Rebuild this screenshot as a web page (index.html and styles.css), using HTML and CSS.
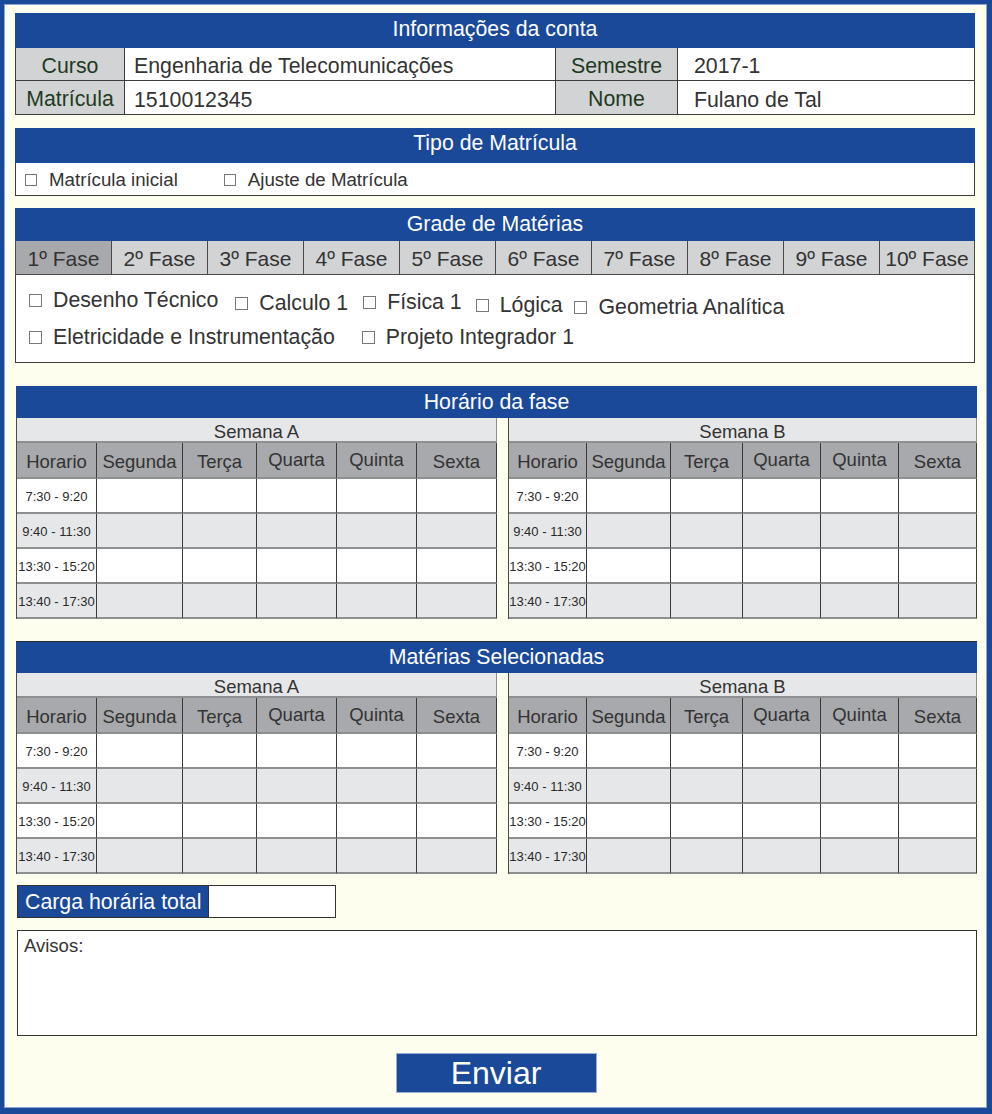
FILE: index.html
```html
<!DOCTYPE html>
<html lang="pt-BR">
<head>
<meta charset="utf-8">
<title>Matrícula</title>
<link rel="stylesheet" href="styles.css">
</head>
<body>
<div class="page">
  <section class="card info-card">
    <div class="bar bar-35">Informações da conta</div>
    <div class="info">
      <div class="lbl">Curso</div>
      <div class="val">Engenharia de Telecomunicações</div>
      <div class="lbl">Semestre</div>
      <div class="val val-r">2017-1</div>
      <div class="lbl">Matrícula</div>
      <div class="val">1510012345</div>
      <div class="lbl">Nome</div>
      <div class="val val-r">Fulano de Tal</div>
    </div>
  </section>

  <section class="card tipo-card">
    <div class="bar bar-35 bar-tipo">Tipo de Matrícula</div>
    <div class="tipo">
      <label class="opt"><span class="cb"></span>Matrícula inicial</label>
      <label class="opt opt-2"><span class="cb"></span>Ajuste de Matrícula</label>
    </div>
  </section>

  <section class="card grade-card">
    <div class="bar bar-33">Grade de Matérias</div>
    <div class="tabs">
      <div class="tab active">1º Fase</div>
      <div class="tab">2º Fase</div>
      <div class="tab">3º Fase</div>
      <div class="tab">4º Fase</div>
      <div class="tab">5º Fase</div>
      <div class="tab">6º Fase</div>
      <div class="tab">7º Fase</div>
      <div class="tab">8º Fase</div>
      <div class="tab">9º Fase</div>
      <div class="tab">10º Fase</div>
    </div>
    <div class="subjects">
      <div class="srow srow-1">
        <label class="item"><span class="cb cb-13"></span>Desenho Técnico</label>
        <label class="item i-calc"><span class="cb cb-13"></span>Calculo 1</label>
        <label class="item i-fis"><span class="cb cb-13"></span>Física 1</label>
        <label class="item i-log"><span class="cb cb-13"></span>Lógica</label>
        <label class="item i-geo"><span class="cb cb-13"></span>Geometria Analítica</label>
      </div>
      <div class="srow">
        <label class="item"><span class="cb cb-13"></span>Eletricidade e Instrumentação</label>
        <label class="item i-proj"><span class="cb cb-13"></span>Projeto Integrador 1</label>
      </div>
    </div>
  </section>

  <section class="card sched-card sched-1">
    <div class="bar bar-32">Horário da fase</div>
    <div class="weeks">
      <div class="week week-a">
        <div class="wname">Semana A</div>
        <div class="hd">Horario</div><div class="hd">Segunda</div><div class="hd">Terça</div><div class="hd up">Quarta</div><div class="hd up">Quinta</div><div class="hd">Sexta</div>
        <div class="tm">7:30 - 9:20</div><div class="c"></div><div class="c"></div><div class="c"></div><div class="c"></div><div class="c"></div>
        <div class="tm alt">9:40 - 11:30</div><div class="c alt"></div><div class="c alt"></div><div class="c alt"></div><div class="c alt"></div><div class="c alt"></div>
        <div class="tm">13:30 - 15:20</div><div class="c"></div><div class="c"></div><div class="c"></div><div class="c"></div><div class="c"></div>
        <div class="tm alt">13:40 - 17:30</div><div class="c alt"></div><div class="c alt"></div><div class="c alt"></div><div class="c alt"></div><div class="c alt"></div>
      </div>
      <div class="week week-b">
        <div class="wname">Semana B</div>
        <div class="hd">Horario</div><div class="hd">Segunda</div><div class="hd">Terça</div><div class="hd up">Quarta</div><div class="hd up">Quinta</div><div class="hd">Sexta</div>
        <div class="tm">7:30 - 9:20</div><div class="c"></div><div class="c"></div><div class="c"></div><div class="c"></div><div class="c"></div>
        <div class="tm alt">9:40 - 11:30</div><div class="c alt"></div><div class="c alt"></div><div class="c alt"></div><div class="c alt"></div><div class="c alt"></div>
        <div class="tm">13:30 - 15:20</div><div class="c"></div><div class="c"></div><div class="c"></div><div class="c"></div><div class="c"></div>
        <div class="tm alt">13:40 - 17:30</div><div class="c alt"></div><div class="c alt"></div><div class="c alt"></div><div class="c alt"></div><div class="c alt"></div>
      </div>
    </div>
  </section>

  <section class="card sched-card sched-2">
    <div class="bar bar-32 bar-edge">Matérias Selecionadas</div>
    <div class="weeks">
      <div class="week week-a">
        <div class="wname">Semana A</div>
        <div class="hd">Horario</div><div class="hd">Segunda</div><div class="hd">Terça</div><div class="hd up">Quarta</div><div class="hd up">Quinta</div><div class="hd">Sexta</div>
        <div class="tm">7:30 - 9:20</div><div class="c"></div><div class="c"></div><div class="c"></div><div class="c"></div><div class="c"></div>
        <div class="tm alt">9:40 - 11:30</div><div class="c alt"></div><div class="c alt"></div><div class="c alt"></div><div class="c alt"></div><div class="c alt"></div>
        <div class="tm">13:30 - 15:20</div><div class="c"></div><div class="c"></div><div class="c"></div><div class="c"></div><div class="c"></div>
        <div class="tm alt">13:40 - 17:30</div><div class="c alt"></div><div class="c alt"></div><div class="c alt"></div><div class="c alt"></div><div class="c alt"></div>
      </div>
      <div class="week week-b">
        <div class="wname">Semana B</div>
        <div class="hd">Horario</div><div class="hd">Segunda</div><div class="hd">Terça</div><div class="hd up">Quarta</div><div class="hd up">Quinta</div><div class="hd">Sexta</div>
        <div class="tm">7:30 - 9:20</div><div class="c"></div><div class="c"></div><div class="c"></div><div class="c"></div><div class="c"></div>
        <div class="tm alt">9:40 - 11:30</div><div class="c alt"></div><div class="c alt"></div><div class="c alt"></div><div class="c alt"></div><div class="c alt"></div>
        <div class="tm">13:30 - 15:20</div><div class="c"></div><div class="c"></div><div class="c"></div><div class="c"></div><div class="c"></div>
        <div class="tm alt">13:40 - 17:30</div><div class="c alt"></div><div class="c alt"></div><div class="c alt"></div><div class="c alt"></div><div class="c alt"></div>
      </div>
    </div>
  </section>

  <div class="carga">
    <div class="carga-label">Carga horária total</div>
    <div class="carga-box"></div>
  </div>

  <div class="avisos">Avisos:</div>

  <div class="actions">
    <button class="enviar" type="button">Enviar</button>
  </div>
</div>
</body>
</html>
```

FILE: styles.css
```css
* { box-sizing: border-box; }

html, body {
  margin: 0;
  padding: 0;
  background: #fefeef;
}

body {
  font-family: "Liberation Sans", Arial, Helvetica, sans-serif;
  color: #333333;
}

.page {
  width: 992px;
  height: 1114px;
  background: #fefeef;
  border-style: solid;
  border-color: #1a4999;
  border-width: 4px 5px 6px 4px;
  box-shadow: inset 0 0 0 1px #8ea6d6;
  padding: 9px 0 0 11px;
}

/* ---------- generic ---------- */
.card { width: 960px; }

.bar {
  background: #1a4999;
  color: #ffffff;
  font-size: 21.3px;
  text-align: center;
}
.bar-35 { height: 35px; line-height: 33px; }
.bar-tipo { line-height: 31px; }
.bar-33 { height: 33px; line-height: 33px; }
.bar-32 { height: 32px; line-height: 33px; }
.bar-edge { border-top: 1px solid #2b2b2b; line-height: 31px; }

.cb {
  display: inline-block;
  flex: none;
  width: 12px;
  height: 12px;
  border: 1px solid #77787b;
  background: #ffffff;
}
.cb-13 { width: 13px; height: 13px; }

/* ---------- informações ---------- */
.info {
  display: grid;
  grid-template-columns: 108px 430px 121px 296px;
  grid-template-rows: 32px 33px;
  gap: 1px;
  background: #3d3d3d;
  border: 1px solid #3d3d3d;
  border-top: 0;
}
.lbl {
  background: #d1d3d4;
  color: #1f3a1f;
  font-size: 21.3px;
  display: flex;
  align-items: center;
  justify-content: center;
  padding-top: 4px;
}
.val {
  background: #ffffff;
  font-size: 21.3px;
  display: flex;
  align-items: center;
  padding: 5px 0 0 9px;
}
.val-r { padding-left: 16px; }

/* ---------- tipo ---------- */
.tipo-card { margin-top: 13px; }
.tipo {
  height: 33px;
  background: #ffffff;
  border: 1px solid #3d3d3d;
  border-top: 0;
  display: flex;
  align-items: center;
  padding: 1px 0 0 9px;
  font-size: 18.7px;
}
.opt {
  display: flex;
  align-items: center;
  gap: 12px;
}
.opt-2 { margin-left: 46px; }

/* ---------- grade ---------- */
.grade-card { margin-top: 12px; }
.tabs {
  display: grid;
  grid-template-columns: repeat(9, 96px) 95px;
  height: 34px;
  border-left: 1px solid #4a4a4a;
  border-bottom: 1px solid #4a4a4a;
}
.tab {
  background: #d1d3d4;
  border-right: 1px solid #4a4a4a;
  font-size: 21px;
  display: flex;
  align-items: center;
  justify-content: center;
  padding-top: 2px;
  white-space: nowrap;
}
.tab.active { background: #a7a9ac; }

.subjects {
  height: 88px;
  background: #ffffff;
  border: 1px solid #3d3d3d;
  border-top: 0;
  padding: 13px 0 0 13px;
  font-size: 21.3px;
}
.srow {
  display: flex;
  align-items: flex-start;
}
.srow-1 { height: 37px; }
.item {
  display: flex;
  align-items: center;
  gap: 11px;
  line-height: 24px;
  white-space: nowrap;
}
.i-calc { margin-left: 17px; margin-top: 3px; }
.i-fis  { margin-left: 15px; margin-top: 2px; }
.i-log  { margin-left: 14px; margin-top: 5px; }
.i-geo  { margin-left: 12px; margin-top: 7px; }
.i-proj { margin-left: 27px; }

/* ---------- horários ---------- */
.sched-card { width: 961px; margin-left: 1px; }
.sched-1 { margin-top: 23px; }
.sched-2 { margin-top: 22px; }

.weeks {
  display: flex;
  gap: 11px;
}
.week {
  display: grid;
  grid-template-rows: 25px 36px 35px 35px 35px 35px;
  border-left: 1px solid #4a4a4a;
}
.week-a { grid-template-columns: 80px 86px 74px 80px 80px 80px; }
.week-b { grid-template-columns: 78px 84px 72px 78px 78px 78px; }

.week > div {
  border-right: 1px solid #3a3a3a;
  border-bottom: 2px solid #8e8f91;
  display: flex;
  align-items: center;
  justify-content: center;
  white-space: nowrap;
}
.week > .wname {
  grid-column: 1 / -1;
  background: #e6e7e8;
  font-size: 18.5px;
  padding-top: 4px;
  border-right-color: #8e8f91;
}
.hd {
  background: #a7a9ac;
  font-size: 18.5px;
  padding-top: 4px;
}
.week > .hd.up { padding-top: 0; padding-bottom: 0; }
.tm {
  font-size: 13px;
  color: #2a2a2a;
  padding-top: 1px;
}
.week > .tm, .week > .c { background: #ffffff; }
.week > .alt { background: #e6e7e8; }

/* ---------- carga ---------- */
.carga {
  display: flex;
  margin: 11px 0 0 2px;
  height: 33px;
}
.carga-label {
  width: 191px;
  background: #1a4999;
  color: #ffffff;
  font-size: 21.3px;
  display: flex;
  align-items: center;
  padding: 2px 0 0 7px;
  border: 1px solid #333333;
  border-right: 0;
  white-space: nowrap;
}
.carga-box {
  width: 128px;
  background: #ffffff;
  border: 1px solid #333333;
}

/* ---------- avisos ---------- */
.avisos {
  width: 960px;
  height: 106px;
  margin: 12px 0 0 2px;
  background: #ffffff;
  border: 1px solid #333333;
  padding: 4px 0 0 6px;
  font-size: 18.5px;
}

/* ---------- enviar ---------- */
.actions {
  width: 962px;
  margin-top: 17px;
  display: flex;
  justify-content: center;
}
.enviar {
  width: 201px;
  height: 40px;
  background: #1a4999;
  color: #ffffff;
  border: 1px solid #9aaed3;
  font-family: "Liberation Sans", Arial, Helvetica, sans-serif;
  font-size: 32px;
  padding: 0;
  line-height: 38px;
}
```
